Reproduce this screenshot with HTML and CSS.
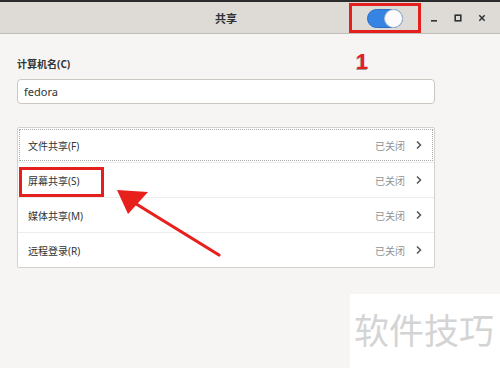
FILE: index.html
```html
<!DOCTYPE html>
<html>
	<head>
		<meta charset="utf-8" />
		<title>共享</title>
		<link rel="stylesheet" href="styles.css">
	</head>
	<body>
		<div class="window">
			<!--标题栏-->
			<div class="headerbar">
				<div class="title">共享</div>
				<div class="controls">
					<div class="mark-box">
						<div class="switch"><span class="knob"></span></div>
					</div>
					<span class="win-btn">
						<svg width="10" height="10" viewBox="0 0 10 10"><rect x="2" y="7" width="6" height="1.6" fill="#2e3436"/></svg>
					</span>
					<span class="win-btn">
						<svg width="10" height="10" viewBox="0 0 10 10"><rect x="2.2" y="2.2" width="5.6" height="5.6" fill="none" stroke="#2e3436" stroke-width="1.6"/></svg>
					</span>
					<span class="win-btn">
						<svg width="10" height="10" viewBox="0 0 10 10"><path d="M2.3 2.3 L7.7 7.7 M7.7 2.3 L2.3 7.7" stroke="#2e3436" stroke-width="1.5"/></svg>
					</span>
				</div>
			</div>

			<div class="content">
				<div class="label">计算机名(C)</div>
				<div class="entry">fedora</div>

				<div class="list">
					<div class="row focus">
						<span class="row-title">文件共享(F)</span>
						<span class="row-state">已关闭</span>
						<svg class="chev" width="8" height="10" viewBox="0 0 8 10"><path d="M2 1.5 L5.5 5 L2 8.5" fill="none" stroke="#555" stroke-width="1.5"/></svg>
					</div>
					<div class="row">
						<span class="row-title">屏幕共享(S)</span>
						<span class="row-state">已关闭</span>
						<svg class="chev" width="8" height="10" viewBox="0 0 8 10"><path d="M2 1.5 L5.5 5 L2 8.5" fill="none" stroke="#555" stroke-width="1.5"/></svg>
					</div>
					<div class="row">
						<span class="row-title">媒体共享(M)</span>
						<span class="row-state">已关闭</span>
						<svg class="chev" width="8" height="10" viewBox="0 0 8 10"><path d="M2 1.5 L5.5 5 L2 8.5" fill="none" stroke="#555" stroke-width="1.5"/></svg>
					</div>
					<div class="row">
						<span class="row-title">远程登录(R)</span>
						<span class="row-state">已关闭</span>
						<svg class="chev" width="8" height="10" viewBox="0 0 8 10"><path d="M2 1.5 L5.5 5 L2 8.5" fill="none" stroke="#555" stroke-width="1.5"/></svg>
					</div>
				</div>
			</div>

			<!--标注-->
			<div class="note-num">1</div>
			<div class="note-row"></div>
			<svg class="note-arrow" width="120" height="80" viewBox="0 0 120 80">
				<path d="M114 74 L28 21" stroke="#e8201c" stroke-width="3.2" stroke-linecap="round"/>
				<polygon points="12,9 43,11 23,33" fill="#e8201c"/>
			</svg>

			<!--水印-->
			<div class="watermark">软件技巧</div>
		</div>
	</body>
</html>
```

FILE: styles.css
```css
*{
	margin: 0;
	padding: 0;
	box-sizing: border-box;
}
body{
	width: 500px;
	height: 368px;
	overflow: hidden;
	background-color: #f6f5f4;
	font-family: "Noto Sans", "Noto Sans CJK SC", sans-serif;
	color: #2e3436;
}
.window{
	position: relative;
	height: 368px;
	border-top: 2px solid #2b2b2b;
}
.headerbar{
	display: flex;
	align-items: center;
	height: 32px;
	background-color: #dedad6;
	border-bottom: 1px solid #c2beb9;
}
.title{
	flex: 1;
	padding-left: 103px;
	text-align: center;
	font-size: 11px;
	font-weight: bold;
}
.controls{
	display: flex;
	align-items: center;
	width: 151px;
	padding-right: 6px;
}
.mark-box{
	display: flex;
	align-items: center;
	justify-content: center;
	width: 72px;
	height: 30px;
	border: 3px solid #e3201e;
	margin-right: 1px;
	margin-top: 1px;
}
.switch{
	position: relative;
	width: 36px;
	height: 19px;
	border-radius: 10px;
	background-color: #3584e4;
	border: 1px solid #2a6fc4;
}
.knob{
	position: absolute;
	right: -1px;
	top: -1px;
	width: 19px;
	height: 19px;
	border-radius: 50%;
	background-color: #fbfbfb;
	border: 1px solid #a8b8cc;
}
.win-btn{
	flex: 1;
	display: flex;
	justify-content: center;
}
.content{
	padding: 0 65px 0 17px;
}
.label{
	margin-top: 23px;
	font-size: 10px;
	font-weight: bold;
	line-height: 14px;
}
.entry{
	margin-top: 8px;
	height: 25px;
	padding-left: 6px;
	line-height: 23px;
	font-size: 11px;
	background-color: #fff;
	border: 1px solid #cdc7c2;
	border-radius: 4px;
}
.list{
	margin-top: 23px;
	background-color: #fff;
	border: 1px solid #d6d1cd;
	border-radius: 2px;
}
.row{
	display: flex;
	align-items: center;
	height: 35px;
	padding: 0 11px 0 10px;
	font-size: 10px;
	border-top: 1px solid #efedeb;
}
.row:first-child{
	border-top: none;
	height: 34px;
}
.row.focus{
	outline: 1px dotted #a9a9a9;
	outline-offset: -2px;
}
.row-title{
	flex: 1;
}
.row-state{
	color: #8f9293;
	margin-right: 10px;
}
.note-num{
	position: absolute;
	left: 356px;
	top: 47px;
	font-family: "Liberation Sans", sans-serif;
	font-size: 22px;
	font-weight: bold;
	color: #e3201e;
	text-shadow: -1px 1px 0 #9a9a9a;
}
.note-row{
	position: absolute;
	left: 19px;
	top: 165px;
	width: 85px;
	height: 30px;
	border: 3px solid #e3201e;
}
.note-arrow{
	position: absolute;
	left: 105px;
	top: 179px;
}
.watermark{
	position: absolute;
	left: 350px;
	top: 292px;
	width: 150px;
	height: 76px;
	padding-left: 4px;
	background-color: #fff;
	font-family: "Noto Sans CJK SC", sans-serif;
	font-size: 35px;
	line-height: 70px;
	color: #d4d4d4;
}
```
